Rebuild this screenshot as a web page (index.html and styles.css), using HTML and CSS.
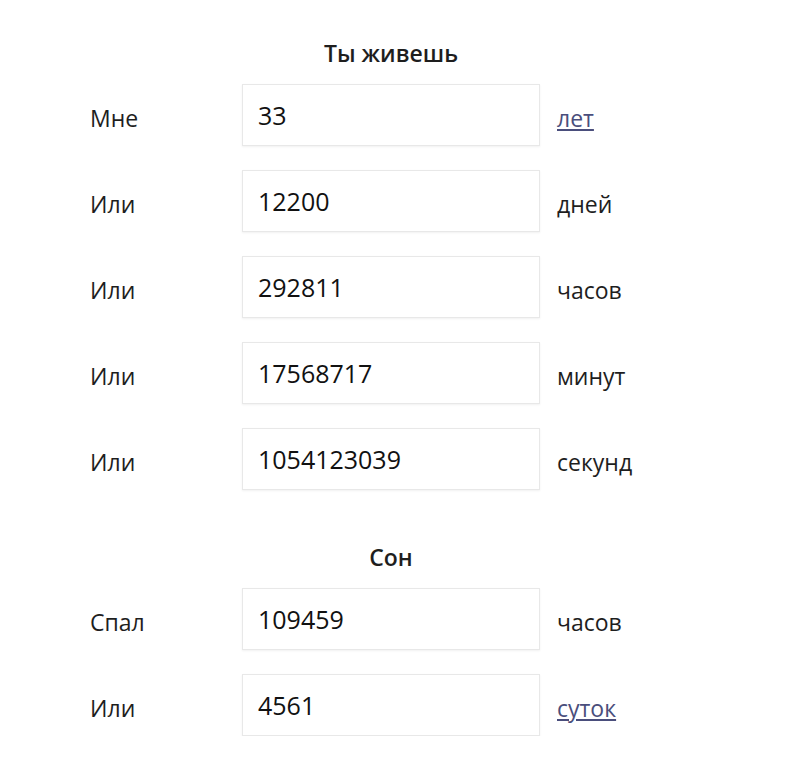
FILE: index.html
```html
<!DOCTYPE html>
<html lang="ru">
<head>
    <meta charset="utf-8">
    <link rel="stylesheet" href="styles.css">
    <title>Ты живешь</title>
</head>
<body>
    <div class="page">

        <!--СКОЛЬКО ЖИВЕШЬ-->
        <section class="block">
            <h2 class="block-title">Ты живешь</h2>
            <div class="rows">
                <span class="label">Мне</span>
                <input class="field" type="text" value="33">
                <a href="#" class="unit unit-link">лет</a>

                <span class="label">Или</span>
                <input class="field" type="text" value="12200">
                <span class="unit">дней</span>

                <span class="label">Или</span>
                <input class="field" type="text" value="292811">
                <span class="unit">часов</span>

                <span class="label">Или</span>
                <input class="field" type="text" value="17568717">
                <span class="unit">минут</span>

                <span class="label">Или</span>
                <input class="field" type="text" value="1054123039">
                <span class="unit">секунд</span>
            </div>
        </section>

        <!--СОН-->
        <section class="block block-sleep">
            <h2 class="block-title">Сон</h2>
            <div class="rows">
                <span class="label">Спал</span>
                <input class="field" type="text" value="109459">
                <span class="unit">часов</span>

                <span class="label">Или</span>
                <input class="field" type="text" value="4561">
                <a href="#" class="unit unit-link">суток</a>
            </div>
        </section>

    </div>
</body>
</html>
```

FILE: styles.css
```css
body{
    margin: 0;
    background: #fff;
    color: #1e1e1e;
    font-family: "Open Sans", "Noto Sans", sans-serif;
}
.page{
    padding: 38px 0 0 90px;
}
.block-sleep{
    margin-top: 52px;
}
.block-title{
    margin: 0 0 16px 152px;
    width: 298px;
    text-align: center;
    font-size: 23px;
    line-height: 30px;
    font-weight: 600;
}
.rows{
    display: grid;
    grid-template-columns: 152px 298px auto;
    row-gap: 24px;
    align-items: center;
}
.label,
.unit{
    font-size: 23px;
    padding-top: 5px;
}
.unit{
    margin-left: 17px;
}
.field{
    box-sizing: border-box;
    width: 298px;
    height: 62px;
    padding: 0 15px;
    border: 1px solid #e8e8e8;
    box-shadow: 0 1px 2px rgba(0, 0, 0, 0.06);
    font-family: inherit;
    font-size: 25px;
    color: #111;
    outline: none;
}
.unit-link{
    color: #4a4e7c;
    text-decoration: underline;
    justify-self: start;
}
```
